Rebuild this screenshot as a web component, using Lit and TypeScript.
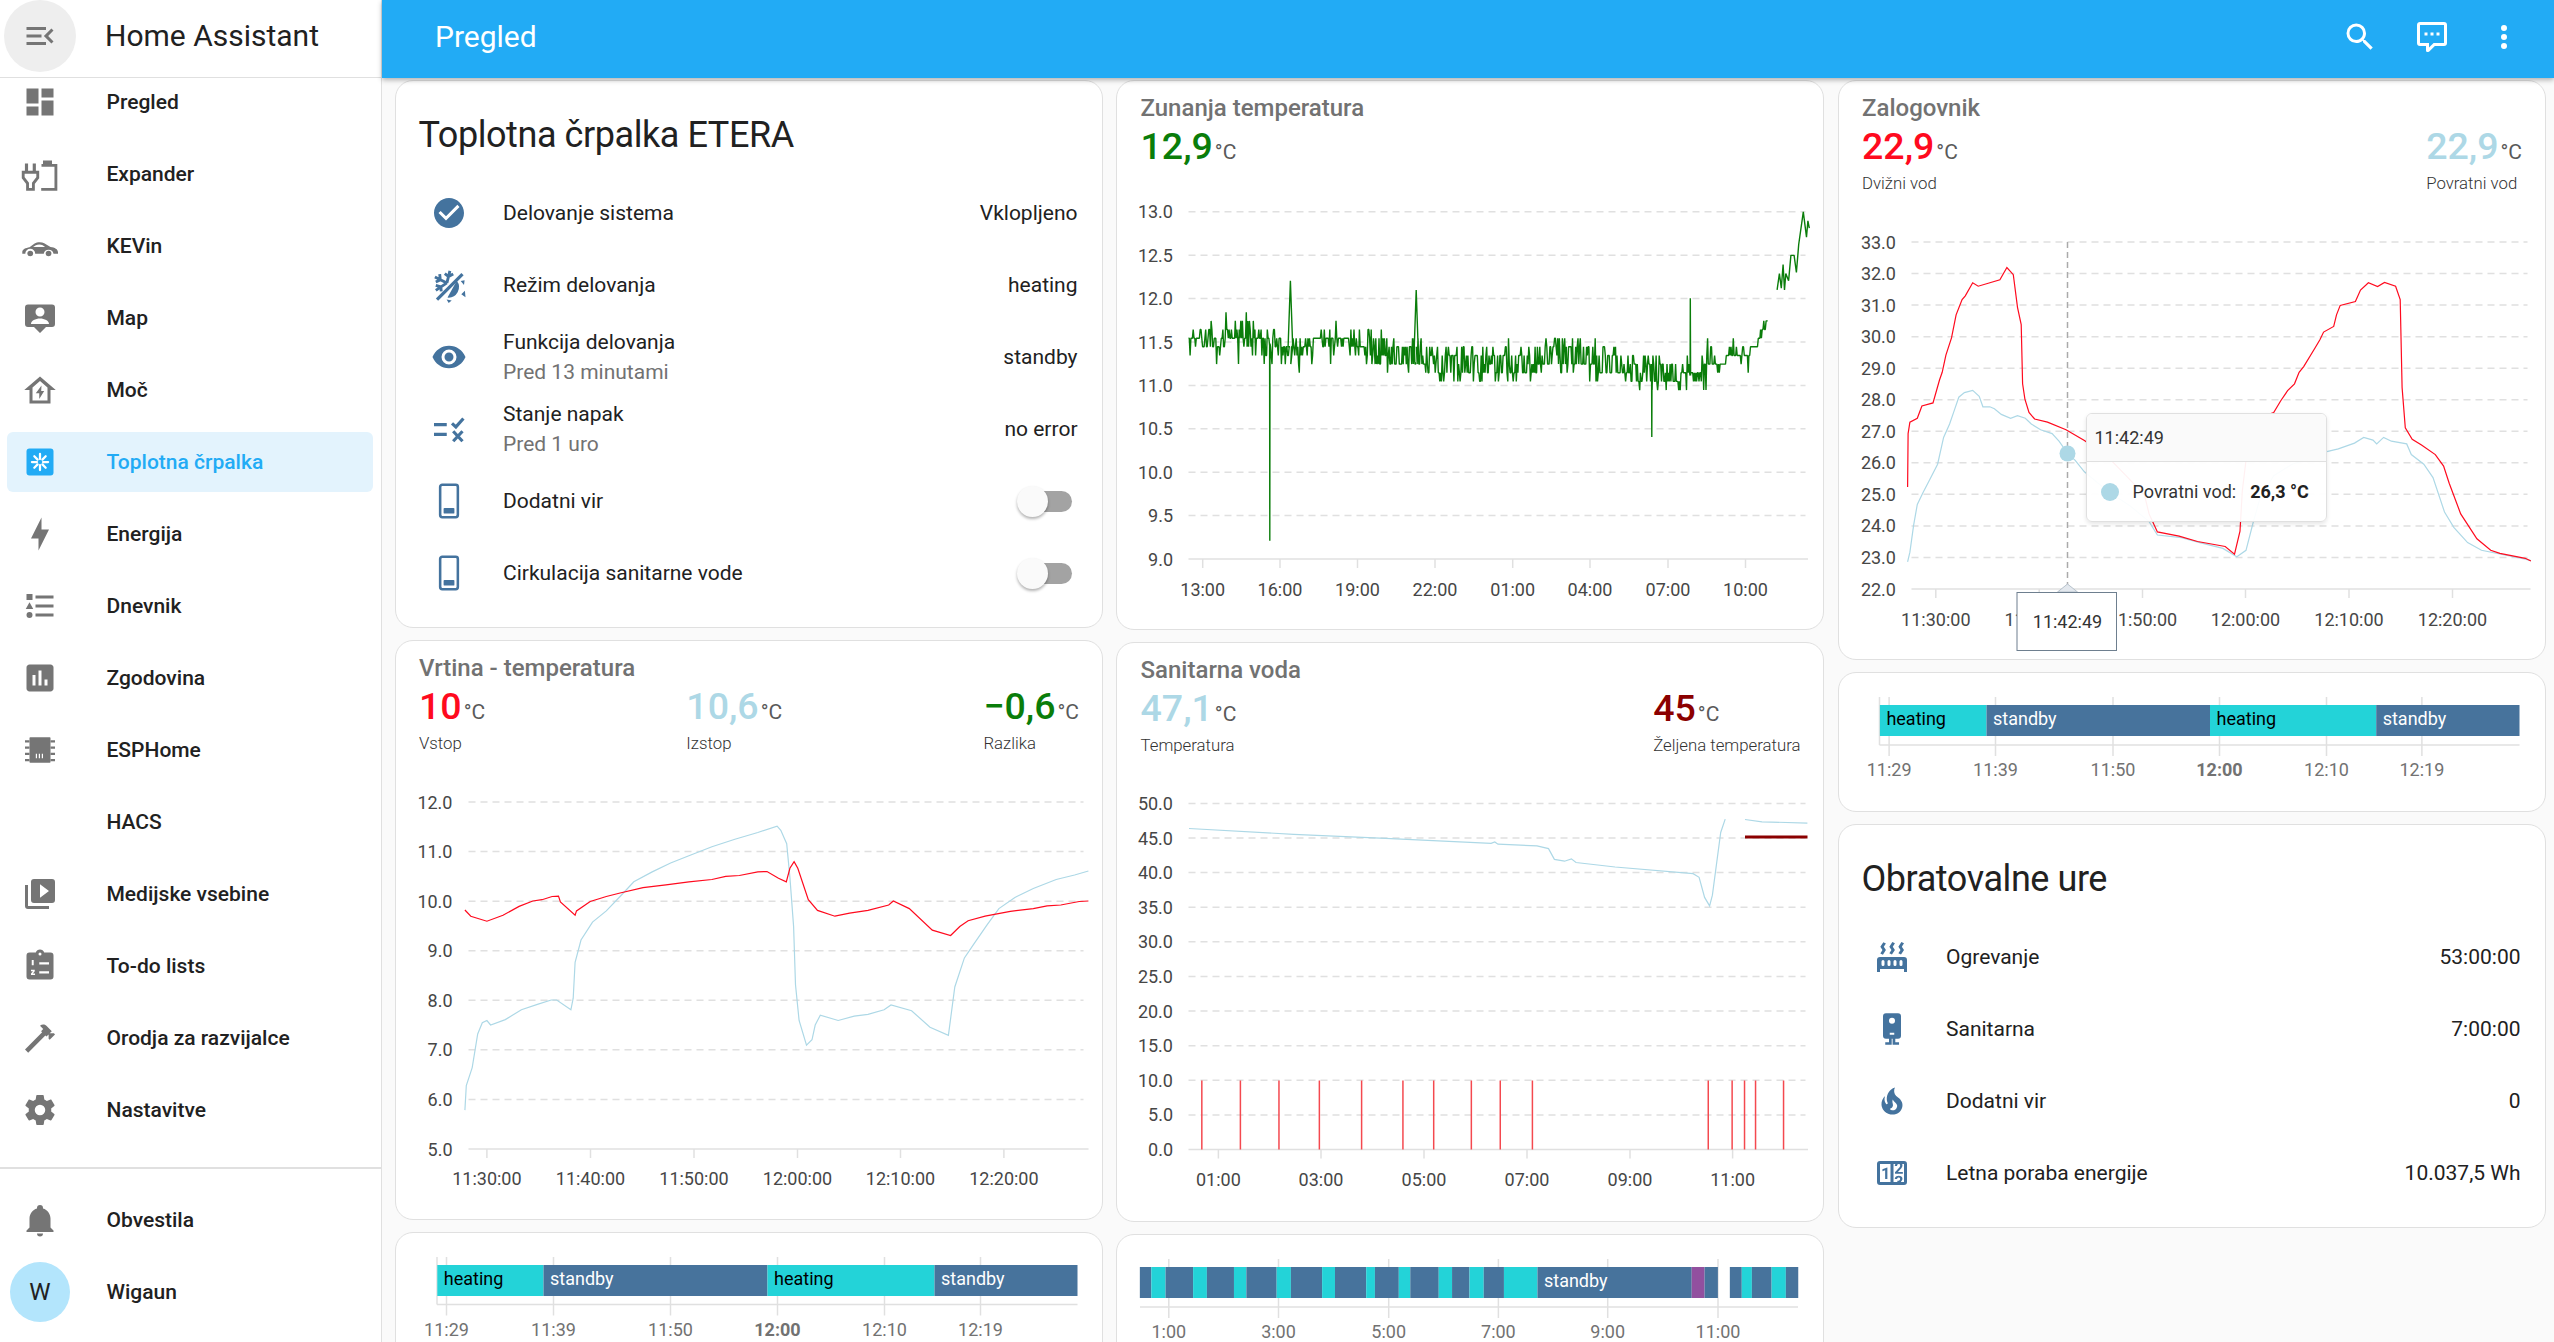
import { LitElement, html, css, svg } from "lit";
import { customElement } from "lit/decorators.js";

const P = {
  menu: "M21,15.61L19.59,17L14.58,12L19.59,7L21,8.39L17.44,12L21,15.61M3,6H16V8H3V6M3,13V11H13V13H3M3,18V16H16V18H3Z",
  dash: "M13,3V9H21V3M13,21H21V11H13M3,21H11V15H3M3,13H11V3H3V13Z",
  bolt: "M11 15H6L13 1V9H18L11 23V15Z",
  list: "M5,9.5L7.5,14H2.5L5,9.5M3,4H7V8H3V4M5,20A2,2 0 0,0 7,18A2,2 0 0,0 5,16A2,2 0 0,0 3,18A2,2 0 0,0 5,20M9,5V7H21V5H9M9,19H21V17H9V19M9,13H21V11H9V13Z",
  chart: "M9 17H7V10H9V17M13 17H11V7H13V17M17 17H15V13H17V17M19 3H5C3.9 3 3 3.9 3 5V19C3 20.1 3.9 21 5 21H19C20.1 21 21 20.1 21 19V5C21 3.9 20.1 3 19 3Z",
  media: "M4,6H2V20A2,2 0 0,0 4,22H18V20H4V6M20,2H8A2,2 0 0,0 6,4V16A2,2 0 0,0 8,18H20A2,2 0 0,0 22,16V4A2,2 0 0,0 20,2M12,14.5V5.5L18,10L12,14.5Z",
  hammer: "M2 19.63L13.43 8.2L12.72 7.5L14.14 6.07L12 3.89C13.2 2.7 15.09 2.7 16.27 3.89L19.87 7.5L18.45 8.91H21.29L22 9.62L18.45 13.21L17.74 12.5V9.62L16.27 11.04L15.56 10.33L4.13 21.76L2 19.63Z",
  cog: "M12,15.5A3.5,3.5 0 0,1 8.5,12A3.5,3.5 0 0,1 12,8.5A3.5,3.5 0 0,1 15.5,12A3.5,3.5 0 0,1 12,15.5M19.43,12.97C19.47,12.65 19.5,12.33 19.5,12C19.5,11.67 19.47,11.34 19.43,11L21.54,9.37C21.73,9.22 21.78,8.95 21.66,8.73L19.66,5.27C19.54,5.05 19.27,4.96 19.05,5.05L16.56,6.05C16.04,5.66 15.5,5.32 14.87,5.07L14.5,2.42C14.46,2.18 14.25,2 14,2H10C9.75,2 9.54,2.18 9.5,2.42L9.13,5.07C8.5,5.32 7.96,5.66 7.44,6.05L4.95,5.05C4.73,4.96 4.46,5.05 4.34,5.27L2.34,8.73C2.21,8.95 2.27,9.22 2.46,9.37L4.57,11C4.53,11.34 4.5,11.67 4.5,12C4.5,12.33 4.53,12.65 4.57,12.97L2.46,14.63C2.27,14.78 2.21,15.05 2.34,15.27L4.34,18.73C4.46,18.95 4.73,19.03 4.95,18.95L7.44,17.94C7.96,18.34 8.5,18.68 9.13,18.93L9.5,21.58C9.54,21.82 9.75,22 10,22H14C14.25,22 14.46,21.82 14.5,21.58L14.87,18.93C15.5,18.67 16.04,18.34 16.56,17.94L19.05,18.95C19.27,19.03 19.54,18.95 19.66,18.73L21.66,15.27C21.78,15.05 21.73,14.78 21.54,14.63L19.43,12.97Z",
  bell: "M21,19V20H3V19L5,17V11C5,7.9 7.03,5.17 10,4.29C10,4.19 10,4.1 10,4A2,2 0 0,1 12,2A2,2 0 0,1 14,4C14,4.1 14,4.19 14,4.29C16.97,5.17 19,7.9 19,11V17L21,19M14,21A2,2 0 0,1 12,23A2,2 0 0,1 10,21",
  search: "M9.5,3A6.5,6.5 0 0,1 16,9.5C16,11.11 15.41,12.59 14.44,13.73L14.71,14H15.5L20.5,19L19,20.5L14,15.5V14.71L13.73,14.44C12.59,15.41 11.11,16 9.5,16A6.5,6.5 0 0,1 3,9.5A6.5,6.5 0 0,1 9.5,3M9.5,5C7,5 5,7 5,9.5C5,12 7,14 9.5,14C12,14 14,12 14,9.5C14,7 12,5 9.5,5Z",
  comment: "M9,22A1,1 0 0,1 8,21V18H4A2,2 0 0,1 2,16V4C2,2.89 2.9,2 4,2H20A2,2 0 0,1 22,4V16A2,2 0 0,1 20,18H13.9L10.2,21.71C10,21.9 9.75,22 9.5,22V22H9M10,16V19.08L13.08,16H20V4H4V16H10M17,11H15V9H17V11M13,11H11V9H13V11M9,11H7V9H9V11Z",
  dots: "M12,16A2,2 0 0,1 14,18A2,2 0 0,1 12,20A2,2 0 0,1 10,18A2,2 0 0,1 12,16M12,10A2,2 0 0,1 14,12A2,2 0 0,1 12,14A2,2 0 0,1 10,12A2,2 0 0,1 12,10M12,4A2,2 0 0,1 14,6A2,2 0 0,1 12,8A2,2 0 0,1 10,6A2,2 0 0,1 12,4Z",
  check: "M12 2C6.5 2 2 6.5 2 12S6.5 22 12 22 22 17.5 22 12 17.5 2 12 2M10 17L5 12L6.41 10.59L10 14.17L17.59 6.58L19 8L10 17Z",
  eye: "M12,9A3,3 0 0,0 9,12A3,3 0 0,0 12,15A3,3 0 0,0 15,12A3,3 0 0,0 12,9M12,17A5,5 0 0,1 7,12A5,5 0 0,1 12,7A5,5 0 0,1 17,12A5,5 0 0,1 12,17M12,4.5C7,4.5 2.73,7.61 1,12C2.73,16.39 7,19.5 12,19.5C17,19.5 21.27,16.39 23,12C21.27,7.61 17,4.5 12,4.5Z",
  radiator: "M7.95,3L6.53,5.19L7.95,7.4H7.94L5.95,10.5L4.22,9.6L5.64,7.39L4.22,5.19L6.22,2.09L7.95,3M13.95,2.89L12.53,5.1L13.95,7.3L13.94,7.31L11.95,10.4L10.22,9.5L11.64,7.3L10.22,5.1L12.22,2L13.95,2.89M20,2.89L18.56,5.1L20,7.3V7.31L18,10.4L16.25,9.5L17.67,7.3L16.25,5.1L18.25,2L20,2.89M2,22V14A2,2 0 0,1 4,12H20A2,2 0 0,1 22,14V22H20V20H4V22H2M6,14A1,1 0 0,0 5,15V17A1,1 0 0,0 6,18A1,1 0 0,0 7,17V15A1,1 0 0,0 6,14M10,14A1,1 0 0,0 9,15V17A1,1 0 0,0 10,18A1,1 0 0,0 11,17V15A1,1 0 0,0 10,14M14,14A1,1 0 0,0 13,15V17A1,1 0 0,0 14,18A1,1 0 0,0 15,17V15A1,1 0 0,0 14,14M18,14A1,1 0 0,0 17,15V17A1,1 0 0,0 18,18A1,1 0 0,0 19,17V15A1,1 0 0,0 18,14Z",
  fire: "M17.66 11.2C17.43 10.9 17.15 10.64 16.89 10.38C16.22 9.78 15.46 9.35 14.82 8.72C13.33 7.26 13 4.85 13.95 3C13 3.23 12.17 3.75 11.46 4.32C8.87 6.4 7.85 10.07 9.07 13.22C9.11 13.32 9.15 13.42 9.15 13.55C9.15 13.77 9 13.97 8.8 14.05C8.57 14.15 8.33 14.09 8.14 13.93C8.08 13.88 8.04 13.83 8 13.76C6.87 12.33 6.69 10.28 7.45 8.64C5.78 10 4.87 12.3 5 14.47C5.06 14.97 5.12 15.47 5.29 15.97C5.43 16.57 5.7 17.17 6 17.7C7.08 19.43 8.95 20.67 10.96 20.92C13.1 21.19 15.39 20.8 17.03 19.32C18.86 17.66 19.5 15 18.56 12.72L18.43 12.46C18.22 12 17.66 11.2 17.66 11.2M14.5 17.5C14.22 17.74 13.76 18 13.4 18.1C12.28 18.5 11.16 17.94 10.5 17.28C11.69 17 12.4 16.12 12.61 15.23C12.78 14.43 12.46 13.77 12.33 13C12.21 12.26 12.23 11.63 12.5 10.94C12.69 11.32 12.89 11.7 13.13 12C13.9 13 15.11 13.44 15.37 14.8C15.41 14.94 15.43 15.08 15.43 15.23C15.46 16.05 15.1 16.95 14.5 17.5H14.5Z",
  counter: "M4,4H20A2,2 0 0,1 22,6V18A2,2 0 0,1 20,20H4A2,2 0 0,1 2,18V6A2,2 0 0,1 4,4M4,6V18H11V6H4M20,18V6H18.76C19,6.54 18.95,7.07 18.95,7.13C18.88,7.8 18.41,8.5 18.24,8.75L15.91,11.3L19.23,11.28L19.24,12.5L14.04,12.47L14,11.47C14,11.47 17.05,8.24 17.2,7.95C17.34,7.67 17.91,6 16.5,6C15.27,6.05 15.41,7.3 15.41,7.3L13.87,7.31C13.87,7.31 13.88,6.65 14.25,6H13V18H15.58L15.57,17.14L16.54,17.13C16.54,17.13 17.45,16.97 17.46,16.08C17.5,15.08 16.65,15.08 16.5,15.08C16.37,15.08 15.43,15.13 15.43,15.95H13.91C13.91,15.95 13.95,13.89 16.5,13.89C19.1,13.89 18.96,15.91 18.96,15.91C18.96,15.91 19,17.16 17.85,17.63L18.37,18H20M8.92,16H7.42V10.2L5.62,10.76V9.53L8.76,8.41H8.92V16Z",
};

const ico = (inner: unknown) =>
  html`<svg class="ico" viewBox="0 0 24 24" fill="currentColor">${inner}</svg>`;
const mdi = (d: string, rule = "nonzero") => ico(svg`<path d=${d} fill-rule=${rule}></path>`);

const I = {
  expander: ico(svg`<g fill="none" stroke="currentColor" stroke-width="1.9">
    <path d="M0.8 10.8H10.5V14.5L7.6 18.2V22.2H3.7V18.2L0.8 14.5Z"></path>
    <path d="M3 10.8V5M8.2 10.8V5" stroke-width="2.1"></path>
    <path d="M13 6.2H22.6V22.2H12.8"></path></g>
    <rect x="14" y="3" width="6" height="3"></rect>`),
  car: ico(svg`<path fill-rule="evenodd" d="M0.2 16C0.2 14 2.5 13.3 5 12.8L8.4 10.4C10 9.4 13 9.2 14.8 10.2L19 12.6C21.8 12.9 24 14 24 16.2V17.2H21A3.3 3.3 0 0 0 14.5 17.2H8.8A3.3 3.3 0 0 0 2.2 17.2H0.2ZM7.4 12.7H15.4L13.8 11.5C12.5 10.8 10.5 10.8 9.2 11.5Z"></path>
    <circle cx="5.5" cy="17" r="1.9"></circle><circle cx="17.7" cy="17" r="1.9"></circle>`),
  map: ico(svg`<path fill-rule="evenodd" d="M4 3H20A2 2 0 0 1 22 5V16A2 2 0 0 1 20 18H16L12 22L8 18H4A2 2 0 0 1 2 16V5A2 2 0 0 1 4 3ZM12 5A3 3 0 1 0 12 11A3 3 0 1 0 12 5ZM6 16H18C18 14 15 12.4 12 12.4C9 12.4 6 14 6 16Z"></path>`),
  home: ico(svg`<path fill-rule="evenodd" d="M12 3L1.5 12H5V21H19V12H22.5L12 3ZM7 19V10.4L12 6L17 10.4V19Z"></path><path d="M13 9L9.2 14.2H11.5V18L14.8 12.6H12.8Z"></path>`),
  pump: ico(svg`<rect x="3" y="3" width="18" height="18" rx="2"></rect>
    <g stroke="#fff" stroke-width="1.5" stroke-linecap="round"><path d="M12 6.6V10M12 14V17.4M6.6 12H10M14 12H17.4M8.2 8.2L10.4 10.4M13.6 13.6L15.8 15.8M15.8 8.2L13.6 10.4M10.4 13.6L8.2 15.8"></path></g>`),
  esp: ico(svg`<rect x="5" y="3.5" width="14" height="17" rx="0.5"></rect>
    <path d="M2 5.5H5V7H2ZM2 9.7H5V11.2H2ZM2 13.9H5V15.4H2ZM2 18H5V19.5H2ZM19 5.5H22V7H19ZM19 9.7H22V11.2H19ZM19 13.9H22V15.4H19ZM19 18H22V19.5H19Z"></path>
    <path d="M9.2 14.5H10V17.5H9.2ZM11.2 14.5H12V17.5H11.2ZM13.2 14.5H14V17.5H13.2Z" fill="#fff"></path>`),
  todo: ico(svg`<path fill-rule="evenodd" d="M19,3H14.82C14.4,1.84 13.3,1 12,1C10.7,1 9.6,1.84 9.18,3H5A2,2 0 0,0 3,5V19A2,2 0 0,0 5,21H19A2,2 0 0,0 21,19V5A2,2 0 0,0 19,3M12,3A1,1 0 0,1 13,4A1,1 0 0,1 12,5A1,1 0 0,1 11,4A1,1 0 0,1 12,3M11.5 9.5H18V11H11.5ZM11.5 15.5H18V17H11.5ZM6.5 8H7.8V11.5H6.5ZM6 14.5H8.5V15.5L7.3 17H8.7V18H6V17L7.3 15.5H6Z"></path>`),
  snow: ico(svg`<g fill="none" stroke="currentColor" stroke-width="1.9">
    <path d="M4 21.8L21 4.8" stroke-width="2.1"></path>
    <path d="M10.6 10.6L12.6 2.6M9.2 4.4L11.7 6.4L14.8 4.6M10.6 10.6L2.6 6.6M3.2 10L6.2 8.6L5.8 4.8M10.6 10.6L3.2 15.6M6.8 16.2L6.6 13.2L3.2 12.2"></path></g>
    <path d="M17.2 9.2A7 7 0 0 1 11 20.4Z"></path>
    <path d="M19.8 9.4L22.4 8.8L22 12ZM20.2 18.2L22.6 15.8L23 20.2ZM10.4 21.6L13.8 22.4L11.8 24Z"></path>`),
  boolean: ico(svg`<path d="M2 8H10.5V10.2H2ZM2 14.5H10.5V16.7H2Z"></path>
    <g fill="none" stroke="currentColor" stroke-width="2.1"><path d="M14 8.2L16.6 10.6L21.6 5"></path><path d="M14.8 13.5L21 20.2M21 13.5L14.8 20.2"></path></g>`),
  phone: ico(svg`<rect x="6.1" y="1.2" width="11.8" height="21.6" rx="1.4" fill="none" stroke="currentColor" stroke-width="1.7"></rect><rect x="8.4" y="16.6" width="7.2" height="3.8" rx="0.6"></rect>`),
  boiler: ico(svg`<path fill-rule="evenodd" d="M8 1.5H16A2 2 0 0 1 18 3.5V16.5A2 2 0 0 1 16 18.5H8A2 2 0 0 1 6 16.5V3.5A2 2 0 0 1 8 1.5ZM12 4.5A2 2 0 1 0 12 8.5A2 2 0 1 0 12 4.5ZM10.5 14.5V15.8H13.5V14.5Z"></path>
    <path d="M10 18H11.8V22.5H7.5V20.8H10ZM12.4 18H14.2V20.8H16.7V22.5H12.4Z"></path>`),
};

const nav: [string, unknown][] = [
  ["Pregled", mdi(P.dash)], ["Expander", I.expander], ["KEVin", I.car], ["Map", I.map],
  ["Moč", I.home], ["Toplotna črpalka", I.pump], ["Energija", mdi(P.bolt)], ["Dnevnik", mdi(P.list)],
  ["Zgodovina", mdi(P.chart, "evenodd")], ["ESPHome", I.esp], ["HACS", null],
  ["Medijske vsebine", mdi(P.media, "evenodd")], ["To-do lists", I.todo],
  ["Orodja za razvijalce", mdi(P.hammer)], ["Nastavitve", mdi(P.cog)],
];

const mapPts = (a: number[], x0: number, sx: number, y0: number, sy: number) => {
  const o: string[] = [];
  for (let i = 0; i < a.length; i += 2) o.push(`${(x0 + a[i] / sx).toFixed(1)},${(y0 + a[i + 1] * sy).toFixed(1)}`);
  return o.join(" ");
};

const S5 = [1830, 2.166, 70, 0.3827] as const;
const S6 = [390, 2.178, 640, 0.4477] as const;
const S7 = [1110, 2.178, 640, 0.4477] as const;

const zalRed = [167,1090,168,950,172,920,188,910,198,878,222,870,236,810,242,790,250,745,262,700,272,640,285,600,292,590,308,556,320,565,367,548,382,516,396,535,405,620,413,665,416,820,421,860,430,895,442,912,470,920,510,940,550,968,600,1010,640,1060,680,1110,690,1160,708,1207,755,1218,795,1232,855,1245,875,1265,887,1205,892,1100,900,1020,915,930,930,908,960,895,975,865,990,838,1005,820,1015,790,1025,775,1050,725,1060,705,1068,685,1090,670,1096,640,1104,615,1137,605,1148,575,1165,556,1185,566,1200,555,1224,565,1234,600,1238,830,1245,935,1260,965,1280,980,1310,1005,1328,1035,1340,1080,1365,1160,1400,1225,1430,1255,1450,1263,1505,1276,1517,1283];
const zalBlue = [167,1285,172,1260,180,1190,188,1135,200,1105,215,1070,232,1030,245,960,258,925,268,890,278,855,290,843,308,837,322,853,330,880,345,880,355,885,370,900,390,910,405,903,422,910,435,925,455,940,480,950,495,970,514,1002,530,1020,550,1050,600,1100,650,1140,690,1180,708,1215,760,1222,800,1235,850,1250,880,1272,900,1255,915,1185,930,1120,960,1060,1000,1030,1050,1010,1075,997,1100,990,1135,975,1155,960,1175,967,1183,977,1198,960,1215,970,1248,977,1258,1005,1285,1030,1305,1065,1330,1155,1350,1195,1380,1235,1410,1255,1505,1278,1517,1282];
const vrtRed = [162,603,175,617,210,628,245,615,280,595,310,583,330,580,352,573,366,572,370,585,402,615,405,605,435,584,470,573,500,565,550,553,600,547,650,540,700,535,730,528,760,526,800,518,820,517,845,532,862,540,870,510,879,495,887,510,910,580,930,604,968,617,1000,610,1040,604,1085,592,1095,583,1130,600,1180,648,1220,660,1240,640,1258,627,1295,617,1350,606,1400,600,1430,594,1460,592,1500,584,1520,583];
const vrtBlue = [162,1050,165,995,178,955,190,880,200,855,210,850,218,860,250,848,285,826,320,814,350,804,362,804,393,826,398,800,402,720,415,670,440,630,470,605,500,573,530,540,570,518,610,498,650,482,700,462,750,445,800,430,842,416,850,425,863,455,870,530,878,640,882,770,890,850,906,905,918,893,925,860,936,838,975,850,1010,840,1040,836,1075,826,1090,815,1135,828,1175,865,1215,883,1229,775,1250,710,1270,680,1300,635,1325,600,1360,575,1400,555,1450,535,1490,525,1520,516];
const sanA = [172,421,400,434,600,443,830,454,838,451,845,456,930,460,955,466,968,490,990,494,1005,489,1015,497,1100,507,1270,522,1283,530,1295,575,1306,594,1312,570,1330,430,1340,400];
const sanB = [1383,401,1420,406,1519,409];
const sanSpikes = [200,284,368,456,548,638,705,787,850,920,1303,1355,1382,1406,1467];

/* Outside temperature: a noisy trace quantised to 0.1 degree steps, with the large spikes of the source. */
function outside(): [string, string] {
  let seed = 11;
  const rnd = () => ((seed = (seed * 1103515245 + 12345) & 0x7fffffff) / 0x7fffffff);
  const base = [171,748,200,732,240,738,340,738,352,760,400,762,460,745,500,745,560,760,640,785,720,805,900,815,940,790,1050,795,1120,815,1180,845,1270,840,1300,810,1380,785,1405,765,1432,690];
  const at = (x: number) => {
    for (let i = 0; i < base.length - 2; i += 2)
      if (x <= base[i + 2]) return base[i + 1] + ((base[i + 3] - base[i + 1]) * (x - base[i])) / (base[i + 2] - base[i]);
    return base[base.length - 1];
  };
  const spikes: [number, number][] = [[348, 1295], [393, 580], [667, 605], [1180, 1010], [1264, 628]];
  const step = 23.8;
  const a: number[] = [];
  let x = 171;
  let nextSpike = 0;
  while (x < 1434) {
    if (nextSpike < spikes.length && x >= spikes[nextSpike][0]) {
      const [sx, sy] = spikes[nextSpike];
      const wide = sx === 393 || sx === 667 ? 5 : 0.5;
      a.push(sx - wide, at(sx), sx, sy, sx + wide, at(sx));
      nextSpike++;
    }
    const r = rnd();
    const wild = x > 560 && x < 1240 ? 1 : x > 1300 ? 0.25 : 0.55;
    let lv = 0;
    if (r < 0.34 * wild) lv = 1;
    else if (r < 0.68 * wild) lv = -1;
    else if (r < 0.78 * wild) lv = 2;
    else if (r < 0.9 * wild) lv = -2;
    else if (rnd() < 0.05) lv = rnd() < 0.6 ? 3 : -3;
    const y = Math.round(at(x) / step + lv) * step;
    a.push(x, y);
    x += 1.7;
  }
  const tail = [1453,605,1458,560,1462,600,1466,535,1469,605,1472,560,1478,580,1483,510,1490,510,1495,557,1500,480,1510,390,1517,460,1520,415,1523,435];
  return [mapPts(a, 1110, 2.178, 70, 0.3635), mapPts(tail, 1110, 2.178, 70, 0.3635)];
}

type Frame = {
  box: [number, number, number, number];
  yLabels: string[]; yTop: number; yBottom: number; labelR: number;
  gridL: number; gridR: number; axisR: number;
  xLabels: string[]; xTicks: number[]; labelY: number;
};

function frame(f: Frame, plot: unknown, over: unknown = null) {
  const n = f.yLabels.length - 1;
  const ys = f.yLabels.map((_, i) => f.yTop + ((f.yBottom - f.yTop) * i) / n);
  return html`<svg class="plot" viewBox=${f.box.join(" ")} width=${f.box[2]} height=${f.box[3]}>
    ${ys.slice(0, -1).map((y) => svg`<line class="grid" x1=${f.gridL} x2=${f.gridR} y1=${y} y2=${y}></line>`)}
    <line class="axis" x1=${f.gridL} x2=${f.axisR} y1=${f.yBottom} y2=${f.yBottom}></line>
    ${f.xTicks.map((x) => svg`<line class="tick" x1=${x} x2=${x} y1=${f.yBottom} y2=${f.yBottom + 9}></line>`)}
    ${f.yLabels.map((t, i) => svg`<text class="lab" text-anchor="end" x=${f.labelR} y=${ys[i] + 6.5}>${t}</text>`)}
    ${f.xLabels.map((t, i) => svg`<text class="lab" text-anchor="middle" x=${f.xTicks[i]} y=${f.labelY + 6.5}>${t}</text>`)}
    ${plot}${over}
  </svg>`;
}

type Seg = [number, number, "h" | "s" | "p", string?];
function timeline(box: [number, number, number, number], barY: number, barH: number, axisY: number, left: number, right: number, segs: Seg[], ticks: [string, number][], labelY: number, boldIdx: number, edgeTick: boolean) {
  return html`<svg class="plot" viewBox=${box.join(" ")} width=${box[2]} height=${box[3]}>
    ${ticks.map(([, x]) => svg`<line class="tl" x1=${x} x2=${x} y1=${barY - 8} y2=${axisY + 11}></line>`)}
    ${edgeTick ? svg`<line class="tl" x1=${left} x2=${left} y1=${barY - 8} y2=${axisY}></line>` : null}
    <line class="tl" x1=${left} x2=${right} y1=${axisY} y2=${axisY}></line>
    ${segs.map(([a, b, k, t]) => svg`<rect class=${"seg-" + k} x=${a} y=${barY} width=${b - a} height=${barH}></rect>
      ${t ? svg`<text class=${k === "h" ? "seg-dark" : "seg-light"} x=${a + 6.5} y=${barY + barH / 2 + 4.5}>${t}</text>` : null}`)}
    ${ticks.map(([t, x], i) => svg`<text class=${i === boldIdx ? "tl-lab bold" : "tl-lab"} text-anchor="middle" x=${x} y=${labelY + 6}>${t}</text>`)}
  </svg>`;
}

const san2Raw: [number, number, "h" | "s" | "p", string?][] = [
  [65,90,"s"],[90,121,"h"],[121,181,"s"],[181,211,"h"],[211,270,"s"],[270,297,"h"],[297,363,"s"],[363,394,"h"],[394,462,"s"],[462,490,"h"],[490,558,"s"],[558,577,"h"],[577,629,"s"],[629,654,"h"],[654,716,"s"],[716,745,"h"],[745,783,"s"],[783,814,"h"],[814,858,"s"],[858,931,"h"],[931,1267,"s","standby"],[1267,1295,"p"],[1295,1324,"s"],[1350,1376,"s"],[1376,1398,"h"],[1398,1441,"s"],[1441,1472,"h"],[1472,1499,"s"],
];

const stat = (v: string, cls: string, label?: string) => html`<div class="stat">
  <div class="val-line"><span class=${"val " + cls}>${v}</span><span class="unit">°C</span></div>
  ${label ? html`<div class="sub">${label}</div>` : null}
</div>`;

const row = (icon: unknown, name: string, value: unknown, sec?: string) => html`<div class="row">
  <span class="row-ico">${icon}</span>
  <div class="row-text"><div>${name}</div>${sec ? html`<div class="sec">${sec}</div>` : null}</div>
  <div class="row-val">${value}</div>
</div>`;

const toggle = html`<span class="toggle"><span class="track"></span><span class="thumb"></span></span>`;

@customElement("app-root")
export class AppRoot extends LitElement {
  static styles = css`
    :host { display: flex; width: 100vw; height: 100vh; overflow: hidden; background: #fafafa; font-family: Roboto, sans-serif; color: #212121; }
    .ico { width: 36px; height: 36px; display: block; flex: none; overflow: visible; }

    .side { width: 382px; flex: none; box-sizing: border-box; height: 100vh; display: flex; flex-direction: column; background: #fff; border-right: 1px solid #e0e0e0; }
    .side-head { height: 78px; flex: none; box-sizing: border-box; display: flex; border-bottom: 1px solid #e0e0e0; }
    .menu-btn { width: 72px; height: 72px; margin-left: 4px; border-radius: 50%; background: #eeeeee; color: #757575; display: flex; align-items: center; justify-content: center; }
    .brand { margin-left: 29px; font-size: 30px; line-height: 72px; color: #212121; }
    .side-nav { flex: 1; min-height: 0; overflow: hidden; }
    .side-list { margin-top: -12.5px; }
    .item { height: 72px; display: flex; align-items: center; color: #757575; position: relative; }
    .item .slot { width: 36px; height: 36px; margin-left: 22px; flex: none; }
    .item .name { margin-left: 48.5px; font-size: 21px; font-weight: 500; color: #212121; position: relative; }
    .item.on .pill { position: absolute; left: 7px; right: 8px; top: 6px; bottom: 6px; background: #e3f3fd; border-radius: 6px; }
    .item.on { color: #22abf5; }
    .item.on .name { color: #22abf5; }
    .item.on .slot { position: relative; }
    .side-foot { height: 175px; flex: none; box-sizing: border-box; border-top: 2px solid #e0e0e0; padding-top: 14.5px; }
    .avatar { width: 60px; height: 60px; margin-left: 10px; border-radius: 50%; background: #b3e5fc; color: #212121; font-size: 24px; display: flex; align-items: center; justify-content: center; flex: none; }
    .item .name.after-avatar { margin-left: 36.5px; }

    .main { flex: 1; min-width: 0; display: flex; flex-direction: column; }
    .top { height: 78px; flex: none; box-sizing: border-box; background: #22abf5; color: #fff; display: flex; align-items: center; padding: 0 14px 5px 53px; box-shadow: 0 2px 5px rgba(0,0,0,.3); position: relative; z-index: 2; }
    .top h1 { flex: 1; margin: 0; font-size: 30px; font-weight: 400; }
    .top .btn { width: 72px; height: 72px; display: flex; align-items: center; justify-content: center; }
    .grid-cols { flex: 1; min-height: 0; overflow: hidden; display: grid; grid-template-columns: repeat(3, 708px); column-gap: 13.5px; padding: 2px 0 0 12.5px; align-items: start; }
    .col { display: flex; flex-direction: column; gap: 12px; }
    .card { box-sizing: border-box; position: relative; background: #fff; border: 1px solid #e0e0e0; border-radius: 18px; overflow: hidden; }
    .h548 { height: 548px; } .h550 { height: 550px; } .h580 { height: 580px; } .h140 { height: 140px; } .h404 { height: 404px; } .h200 { height: 200px; }
    .tip-host { overflow: visible; }

    .ent-title { height: 96px; box-sizing: border-box; padding: 36px 0 0 23px; font-size: 36px; line-height: 36px; font-weight: 400; letter-spacing: -0.012em; }
    .row { height: 72px; display: flex; align-items: center; padding: 0 24px 0 35px; font-size: 21px; line-height: 30px; }
    .row-ico { color: #44739e; margin-right: 36.5px; }
    .row-text { flex: 1; }
    .sec { color: #727272; }
    .row-val { color: #212121; }
    .toggle { display: block; position: relative; width: 54px; height: 30px; margin-right: 6px; }
    .track { position: absolute; left: 8px; right: 0; top: 5px; height: 21px; border-radius: 11px; background: #a3a3a3; }
    .thumb { position: absolute; left: -1px; top: 0; width: 31px; height: 31px; border-radius: 50%; background: #fafafa; box-shadow: 0 2px 3px rgba(0,0,0,.3); }

    .head { box-sizing: border-box; padding: 12px 22.5px 0 23.5px; }
    .h109 { height: 109px; } .h119 { height: 119px; }
    .name-line { font-size: 24px; line-height: 30px; font-weight: 500; color: #727272; }
    .stats { display: flex; justify-content: space-between; margin-top: 4px; }
    .val-line { display: flex; align-items: baseline; height: 38px; line-height: 38px; }
    .val { font-size: 37.5px; font-weight: 500; }
    .unit { font-size: 21px; color: #5a5a5a; margin-left: 2px; }
    .sub { margin-top: 6.5px; font-size: 16.8px; line-height: 22px; font-weight: 300; color: #333; }
    .red { color: #ff0a1e; } .blue { color: #add8e6; } .green { color: #0a7d0a; } .dark { color: #8b0000; }

    .plot { display: block; }
    .grid { stroke: #e0e0e0; stroke-width: 1.5; stroke-dasharray: 7 5; }
    .axis { stroke: #e0e0e0; stroke-width: 1.5; }
    .tick { stroke: #e0e0e0; stroke-width: 1.5; }
    .lab { font-family: Roboto, sans-serif; font-size: 18px; fill: #464646; }
    .l-green { fill: none; stroke: #0a7d0a; stroke-width: 1.4; stroke-linejoin: bevel; }
    .l-red { fill: none; stroke: #ff0a1e; stroke-width: 1.2; }
    .l-blue { fill: none; stroke: #add8e6; stroke-width: 1.2; }
    .l-dark { fill: none; stroke: #8b0000; stroke-width: 3; }
    .l-spike { stroke: #f4494f; stroke-width: 1.5; }
    .cross { stroke: #aaa; stroke-width: 1.5; stroke-dasharray: 6 4; }
    .pt { fill: #add8e6; }
    .ptr-box { fill: #fff; stroke: #6e7f8f; stroke-width: 1; }
    .ptr-tri { fill: #e3e8ee; stroke: #b7c2cc; stroke-width: 1; }
    .ptr-text { font-family: Roboto, sans-serif; font-size: 18px; fill: #333; }
    .tl { stroke: #e0e0e0; stroke-width: 1.5; }
    .seg-h { fill: #23d3d8; } .seg-s { fill: #47739c; } .seg-p { fill: #92509f; }
    .seg-dark { font-family: Roboto, sans-serif; font-size: 18px; fill: #000; }
    .seg-light { font-family: Roboto, sans-serif; font-size: 18px; fill: #fff; }
    .tl-lab { font-family: Roboto, sans-serif; font-size: 18px; fill: #727272; }
    .tl-lab.bold { font-weight: 700; }

    .tooltip { position: absolute; left: 247px; top: 331.5px; width: 241px; height: 109px; box-sizing: border-box; background: rgba(255,255,255,.94); border: 1px solid #e0e0e0; border-radius: 6px; box-shadow: 0 2px 4px rgba(0,0,0,.1); font-size: 18px; color: #333; overflow: hidden; }
    .tip-head { height: 48px; box-sizing: border-box; background: rgba(250,250,250,.95); border-bottom: 1px solid #e0e0e0; padding: 0 8px; line-height: 47px; }
    .tip-body { display: flex; align-items: center; height: 60px; padding-left: 14px; }
    .tip-dot { width: 18px; height: 18px; border-radius: 50%; background: #add8e6; margin-right: 14px; flex: none; }
    .tip-body b { margin-left: 14px; font-weight: 700; color: #212121; }
  `;

  render() {
    const [g1, g2] = outside();
    const red6 = mapPts(vrtRed, ...S6), blue6 = mapPts(vrtBlue, ...S6);
    const navItem = (n: [string, unknown]) => html`<div class=${n[0] === "Toplotna črpalka" ? "item on" : "item"}>
      <span class="pill"></span><span class="slot">${n[1]}</span><span class="name">${n[0]}</span></div>`;
    const sanSegs: Seg[] = san2Raw.map(([a, b, k, t]) => [1110 + a / 2.178, 1110 + b / 2.178, k, t]);

    return html`
      <aside class="side">
        <div class="side-head"><div class="menu-btn">${mdi(P.menu)}</div><div class="brand">Home Assistant</div></div>
        <div class="side-nav"><div class="side-list">${nav.map(navItem)}</div></div>
        <div class="side-foot">
          ${navItem(["Obvestila", mdi(P.bell)])}
          <div class="item"><span class="avatar">W</span><span class="name after-avatar">Wigaun</span></div>
        </div>
      </aside>
      <div class="main">
        <header class="top">
          <h1>Pregled</h1>
          <span class="btn">${mdi(P.search)}</span><span class="btn">${mdi(P.comment)}</span><span class="btn">${mdi(P.dots)}</span>
        </header>
        <div class="grid-cols">
          <div class="col">
            <section class="card h548">
              <div class="ent-title">Toplotna črpalka ETERA</div>
              ${row(mdi(P.check, "evenodd"), "Delovanje sistema", "Vklopljeno")}
              ${row(I.snow, "Režim delovanja", "heating")}
              ${row(mdi(P.eye), "Funkcija delovanja", "standby", "Pred 13 minutami")}
              ${row(I.boolean, "Stanje napak", "no error", "Pred 1 uro")}
              ${row(I.phone, "Dodatni vir", toggle)}
              ${row(I.phone, "Cirkulacija sanitarne vode", toggle)}
            </section>
            <section class="card h580">
              <div class="head h119">
                <div class="name-line">Vrtina - temperatura</div>
                <div class="stats">${stat("10", "red", "Vstop")}${stat("10,6", "blue", "Izstop")}${stat("−0,6", "green", "Razlika")}</div>
              </div>
              ${frame({ box: [395.5, 760, 706, 459], yLabels: ["12.0","11.0","10.0","9.0","8.0","7.0","6.0","5.0"], yTop: 802, yBottom: 1149, labelR: 452, gridL: 468, gridR: 1083, axisR: 1088,
                xLabels: ["11:30:00","11:40:00","11:50:00","12:00:00","12:10:00","12:20:00"], xTicks: [486.4,590,693.5,797,900,1003.4], labelY: 1178 },
                svg`<polyline class="l-blue" points=${blue6}></polyline><polyline class="l-red" points=${red6}></polyline>`)}
            </section>
            <section class="card h200">
              ${timeline([395.5, 1233, 706, 198], 1265, 31, 1304.5, 436.5, 1077,
                [[436.8,543,"h","heating"],[543,767,"s","standby"],[767,934,"h","heating"],[934,1077,"s","standby"]],
                [["11:29",446],["11:39",553],["11:50",670],["12:00",777],["12:10",884],["12:19",980]], 1329.5, 3, true)}
            </section>
          </div>

          <div class="col">
            <section class="card h550">
              <div class="head h109">
                <div class="name-line">Zunanja temperatura</div>
                <div class="stats">${stat("12,9", "green")}</div>
              </div>
              ${frame({ box: [1117, 190, 706, 439], yLabels: ["13.0","12.5","12.0","11.5","11.0","10.5","10.0","9.5","9.0"], yTop: 211.8, yBottom: 559, labelR: 1173, gridL: 1188.5, gridR: 1805.5, axisR: 1808,
                xLabels: ["13:00","16:00","19:00","22:00","01:00","04:00","07:00","10:00"], xTicks: [1202.7,1280,1357.5,1435,1512.7,1590,1668,1745.5], labelY: 589 },
                svg`<polyline class="l-green" points=${g1}></polyline><polyline class="l-green" points=${g2}></polyline>`)}
            </section>
            <section class="card h580">
              <div class="head h119">
                <div class="name-line">Sanitarna voda</div>
                <div class="stats">${stat("47,1", "blue", "Temperatura")}${stat("45", "dark", "Željena temperatura")}</div>
              </div>
              ${frame({ box: [1117, 762, 706, 459], yLabels: ["50.0","45.0","40.0","35.0","30.0","25.0","20.0","15.0","10.0","5.0","0.0"], yTop: 803.4, yBottom: 1149.5, labelR: 1173, gridL: 1188.5, gridR: 1805.5, axisR: 1808,
                xLabels: ["01:00","03:00","05:00","07:00","09:00","11:00"], xTicks: [1218.4,1321,1424,1527,1630,1732.6], labelY: 1179 },
                svg`<polyline class="l-blue" points=${mapPts(sanA, ...S7)}></polyline><polyline class="l-blue" points=${mapPts(sanB, ...S7)}></polyline>
                  <line class="l-dark" x1="1745" x2="1807.5" y1="837" y2="837"></line>
                  ${sanSpikes.map((x) => svg`<line class="l-spike" x1=${1110 + x / 2.178} x2=${1110 + x / 2.178} y1="1080.5" y2="1149.5"></line>`)}`)}
            </section>
            <section class="card h200">
              ${timeline([1117, 1235, 706, 198], 1267, 31, 1307, 1140, 1798, sanSegs,
                [["1:00",1168.8],["3:00",1278.5],["5:00",1388.7],["7:00",1498.4],["9:00",1607.7],["11:00",1718]], 1331.7, -1, false)}
            </section>
          </div>

          <div class="col">
            <section class="card h580 tip-host">
              <div class="head h119">
                <div class="name-line">Zalogovnik</div>
                <div class="stats">${stat("22,9", "red", "Dvižni vod")}${stat("22,9", "blue", "Povratni vod")}</div>
              </div>
              ${frame({ box: [1838.5, 200, 706, 459], yLabels: ["33.0","32.0","31.0","30.0","29.0","28.0","27.0","26.0","25.0","24.0","23.0","22.0"], yTop: 242, yBottom: 589, labelR: 1895.5, gridL: 1911, gridR: 2527, axisR: 2530,
                xLabels: ["11:30:00","11:40:00","11:50:00","12:00:00","12:10:00","12:20:00"], xTicks: [1935.3,2038.7,2142,2245,2348.5,2452], labelY: 619 },
                svg`<polyline class="l-blue" points=${mapPts(zalBlue, ...S5)}></polyline><polyline class="l-red" points=${mapPts(zalRed, ...S5)}></polyline>`,
                svg`<line class="cross" x1="2067" x2="2067" y1="242" y2="586"></line>
                  <circle class="pt" cx="2067" cy="453.5" r="8"></circle>
                  <path class="ptr-tri" d="M2057 592L2067 584L2077 592Z"></path>
                  <rect class="ptr-box" x="2016.5" y="592.5" width="99.5" height="58"></rect>
                  <text class="ptr-text" text-anchor="middle" x="2067" y="627.5">11:42:49</text>`)}
              <div class="tooltip">
                <div class="tip-head">11:42:49</div>
                <div class="tip-body"><span class="tip-dot"></span>Povratni vod:<b>26,3 °C</b></div>
              </div>
            </section>
            <section class="card h140">
              ${timeline([1838.5, 673, 706, 138], 705, 31, 745, 1879, 2519,
                [[1879.4,1986,"h","heating"],[1986,2209.5,"s","standby"],[2209.5,2375.7,"h","heating"],[2375.7,2519,"s","standby"]],
                [["11:29",1888.6],["11:39",1995],["11:50",2112.5],["12:00",2219],["12:10",2326],["12:19",2421.4]], 770, 3, true)}
            </section>
            <section class="card h404">
              <div class="ent-title">Obratovalne ure</div>
              ${row(mdi(P.radiator), "Ogrevanje", "53:00:00")}
              ${row(I.boiler, "Sanitarna", "7:00:00")}
              ${row(mdi(P.fire), "Dodatni vir", "0")}
              ${row(mdi(P.counter), "Letna poraba energije", "10.037,5 Wh")}
            </section>
          </div>
        </div>
      </div>
    `;
  }
}
